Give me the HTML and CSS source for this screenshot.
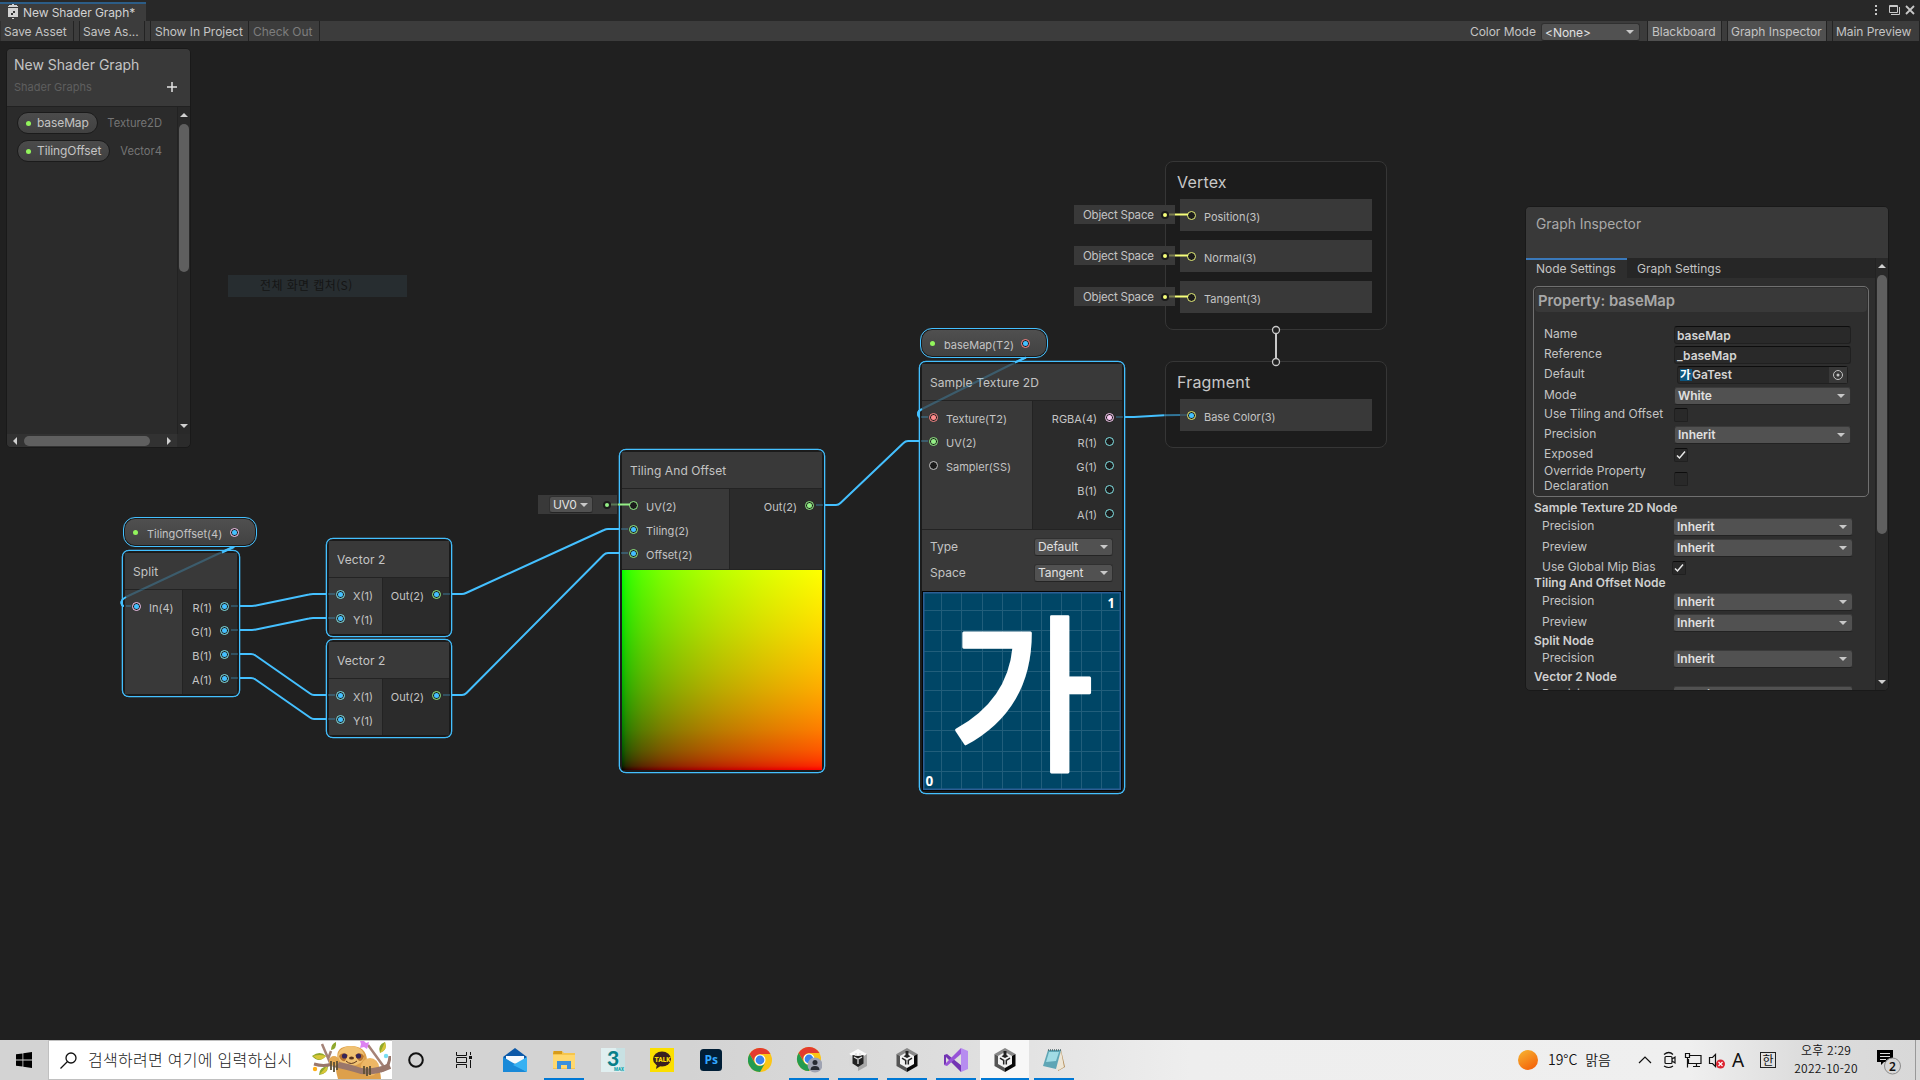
FILE: index.html
```html
<!DOCTYPE html>
<html lang="ko">
<head>
<meta charset="utf-8">
<title>New Shader Graph</title>
<link rel="stylesheet" href="styles.css">
</head>
<body>
<header class="tabbar">
  <div class="tab">
    <svg class="tab-icon" width="10" height="16" viewBox="0 0 10 16"><path fill="#d2d2d2" d="M4 0h2v1H4zM0 2h10v1H0zM0 4h10v9H0zM4 14h2v1H4zM1 1h8v1H1z"/><path fill="#333" d="M5 7h2v2H5zM3 9h2v2H3z"/></svg>
    <span>New Shader Graph*</span>
  </div>
  <div class="window-tools">
    <svg width="50" height="16" viewBox="0 0 50 16" fill="none" stroke="#c8c8c8"><path stroke-width="2" d="M6 3v2M6 7v2M6 11v2"/><path stroke-width="1" d="M19.500 3.500h8v7h-8zM19.500 4.500h8M21 12.500h8.500V5"/><path stroke-width="1.800" d="m36 4 8 8m0-8-8 8"/></svg>
  </div>
</header>
<nav class="toolbar">
  <span class="tool save">Save Asset</span><span class="tool saveas">Save As...</span><span class="tool show">Show In Project</span><span class="tool check">Check Out</span>
  <span class="spacer"></span>
  <span class="mode-label">Color Mode</span><span class="dropdown mode">&lt;None&gt;</span>
  <span class="tool on blackboard-btn">Blackboard</span><span class="tool on inspector-btn">Graph Inspector</span><span class="tool preview-btn">Main Preview</span>
</nav>

<main class="canvas">
  <svg class="edges" width="1920" height="1040" viewBox="0 0 1920 1040">
    <g class="wire">
      <path d="M235 546 126 597Q121 600 121.500 603Q122 606 126 606H131"/>
      <path d="M231 606H252Q254 606 256 605.500L309 594.500Q311 594 313 594H335"/>
      <path d="M231 630H252Q254 630 256 629.500L309 618.500Q311 618 313 618H335"/>
      <path d="M231 654H251Q253.500 654 255.500 655.500L310 693.500Q312 695 314 695H335"/>
      <path d="M231 678H251Q253.500 678 255.500 679.500L310 717.500Q312 719 314 719H335"/>
      <path d="M443 594H462Q464 594 466 593L604 530Q606 529 608 529H628"/>
      <path d="M443 695H462Q464.500 695 466.500 693L603.500 555Q605.500 553 608 553H628"/>
      <path d="M816 505H836Q838.500 505 840.500 503L903.500 443Q905.500 441 908 441H928"/>
      <path d="M1116 417H1134L1164 415.300"/>
      <path d="M1026 357 922 409Q918 411 918 414Q918.500 417 922 417H928"/>
    </g>
  </svg>

  <section class="stack vertex">
    <h2>Vertex</h2>
    <div class="block"><i class="port yellow"></i><span>Position(3)</span></div>
    <div class="block"><i class="port yellow"></i><span>Normal(3)</span></div>
    <div class="block"><i class="port yellow"></i><span>Tangent(3)</span></div>
  </section>
  <section class="stack fragment">
    <h2>Fragment</h2>
    <div class="block"><i class="port yellow linked"></i><span>Base Color(3)</span></div>
  </section>
  <div class="slot space s1"><span>Object Space</span><i class="dot"></i></div>
  <div class="slot space s2"><span>Object Space</span><i class="dot"></i></div>
  <div class="slot space s3"><span>Object Space</span><i class="dot"></i></div>
  <div class="slot uv"><span class="dropdown">UV0</span><i class="dot green"></i></div>

  <div class="pill p-tiling"><i class="exposed"></i><span>TilingOffset(4)</span><i class="port pink linked"></i></div>
  <div class="pill p-base"><i class="exposed"></i><span>baseMap(T2)</span><i class="port red linked"></i></div>

  <article class="node split">
    <h3>Split</h3>
    <div class="ports">
      <div class="in"><div class="row"><i class="port pink linked"></i><span>In(4)</span></div></div>
      <div class="out">
        <div class="row"><span>R(1)</span><i class="port cyan linked"></i></div>
        <div class="row"><span>G(1)</span><i class="port cyan linked"></i></div>
        <div class="row"><span>B(1)</span><i class="port cyan linked"></i></div>
        <div class="row"><span>A(1)</span><i class="port cyan linked"></i></div>
      </div>
    </div>
  </article>
  <article class="node vector v1">
    <h3>Vector 2</h3>
    <div class="ports">
      <div class="in"><div class="row"><i class="port cyan linked"></i><span>X(1)</span></div><div class="row"><i class="port cyan linked"></i><span>Y(1)</span></div></div>
      <div class="out"><div class="row"><span>Out(2)</span><i class="port green linked"></i></div></div>
    </div>
  </article>
  <article class="node vector v2">
    <h3>Vector 2</h3>
    <div class="ports">
      <div class="in"><div class="row"><i class="port cyan linked"></i><span>X(1)</span></div><div class="row"><i class="port cyan linked"></i><span>Y(1)</span></div></div>
      <div class="out"><div class="row"><span>Out(2)</span><i class="port green linked"></i></div></div>
    </div>
  </article>
  <article class="node tiling">
    <h3>Tiling And Offset</h3>
    <div class="ports">
      <div class="in"><div class="row"><i class="port green"></i><span>UV(2)</span></div><div class="row"><i class="port green linked"></i><span>Tiling(2)</span></div><div class="row"><i class="port green linked"></i><span>Offset(2)</span></div></div>
      <div class="out"><div class="row"><span>Out(2)</span><i class="port green own"></i></div></div>
    </div>
    <div class="uv-preview"></div>
  </article>
  <article class="node sample">
    <h3>Sample Texture 2D</h3>
    <div class="ports">
      <div class="in"><div class="row"><i class="port red own"></i><span>Texture(T2)</span></div><div class="row"><i class="port green own"></i><span>UV(2)</span></div><div class="row"><i class="port gray"></i><span>Sampler(SS)</span></div></div>
      <div class="out">
        <div class="row"><span>RGBA(4)</span><i class="port pink own"></i></div>
        <div class="row"><span>R(1)</span><i class="port cyan"></i></div>
        <div class="row"><span>G(1)</span><i class="port cyan"></i></div>
        <div class="row"><span>B(1)</span><i class="port cyan"></i></div>
        <div class="row"><span>A(1)</span><i class="port cyan"></i></div>
      </div>
    </div>
    <div class="controls">
      <div><label>Type</label><span class="dropdown">Default</span></div>
      <div><label>Space</label><span class="dropdown">Tangent</span></div>
    </div>
    <div class="tex-preview">
      <svg width="198" height="198" viewBox="0 0 198 198">
        <rect width="198" height="198" fill="#004666"/>
        <path stroke="#215e7b" d="M18.500 0v198M38.500 0v198M59.500 0v198M79.500 0v198M98.500 0v198M118.500 0v198M138.500 0v198M158.500 0v198M178.500 0v198M0 18.500h198M0 38.500h198M0 59.500h198M0 79.500h198M0 98.500h198M0 119.500h198M0 138.500h198M0 159.500h198M0 179.500h198"/>
        <rect x=".75" y=".75" width="196.500" height="196.500" fill="none" stroke="#2c5f95" stroke-width="1.500"/>
        <text class="glyph" transform="translate(26.500 166) scale(.93 1)">가</text>
        <text class="corner" transform="translate(184.500 15.500) scale(.85 1)">1</text>
        <text class="corner" transform="translate(2.500 193.500) scale(.9 1)">0</text>
      </svg>
    </div>
  </article>

  <svg class="edges" width="1920" height="1040" viewBox="0 0 1920 1040">
    <g class="wire faint">
      <path d="M222 552 126 597M126 606H131M231 606H238M231 630H238M231 654H238M231 678H238M328 594H335M328 618H335M328 695H335M328 719H335M443 594H450M443 695H450M621 529H628M621 553H628M816 505H823M921 441H928M1116 417H1123M921 417H928M1016 362 922 409"/>
    </g>
    <g class="wire">
      <path d="M234 547 222 552.500M1026 357.500 1015 362.500M126 597Q121 600 121.500 603Q122 606 124 606M922 409Q918 411 918 414Q918.500 417 920 417"/>
      <path opacity=".55" d="M1164 415.300 1180 415"/><path opacity=".2" d="M1180 415H1187"/>
    </g>
    <g stroke="#f6ff7a" stroke-width="2"><path d="M1175 214.500h13M1175 255.500h13M1175 296.500h13"/><path opacity=".35" d="M1169 214.500h6M1169 255.500h6M1169 296.500h6"/></g>
    <g stroke="#94ef86" stroke-width="2"><path d="M618 504.500h12"/><path opacity=".35" d="M611 504.500h7"/></g>
    <g fill="#202020" stroke="#c8c8c8"><path stroke-width="2" d="M1276 330v32"/><circle cx="1276" cy="330" r="3.500" stroke-width="1.300"/><circle cx="1276" cy="362" r="3.500" stroke-width="1.300"/></g>
  </svg>

  <aside class="panel blackboard">
    <header><h1>New Shader Graph</h1><div><span>Shader Graphs</span><svg width="10" height="10" viewBox="0 0 10 10" stroke="#e4e4e4" stroke-width="1.500"><path d="M5 0v10M0 5h10"/></svg></div></header>
    <div class="bb-body">
      <ul>
        <li><span class="chip"><i class="exposed"></i>baseMap</span><em>Texture2D</em></li>
        <li><span class="chip"><i class="exposed"></i>TilingOffset</span><em>Vector4</em></li>
      </ul>
      <div class="vbar"><i class="up"></i><b></b><i class="down"></i></div>
    </div>
    <div class="hbar"><i class="left"></i><b></b><i class="right"></i></div>
  </aside>

  <div class="ghost-menu">전체 화면 캡처(S)</div>

  <aside class="panel inspector">
    <header><h1>Graph Inspector</h1></header>
    <div class="insp-main">
      <div class="insp-content">
        <div class="tabs"><span class="active">Node Settings</span><span>Graph Settings</span></div>
        <div class="property">
          <h4>Property: baseMap</h4>
          <div class="field h20"><label>Name</label><span class="text">baseMap</span></div>
          <div class="field h20"><label>Reference</label><span class="text">_baseMap</span></div>
          <div class="field h20"><label>Default</label><span class="object"><svg width="12" height="12" viewBox="0 0 12 12"><rect width="12" height="12" fill="#0d567f"/><text x="0" y="10" font-size="11.500" font-weight="700" fill="#fff" font-family="Noto Sans CJK KR">가</text></svg><span>GaTest</span><svg class="pick" width="18" height="16" viewBox="0 0 18 16"><path fill="#383838" d="M0 0h18v16H0z"/><circle cx="9" cy="8" r="4.500" fill="none" stroke="#c4c4c4"/><circle cx="9" cy="8" r="1.500" fill="#c4c4c4"/></svg></span></div>
          <div class="field h21"><label>Mode</label><span class="dropdown">White</span></div>
          <div class="field h16"><label>Use Tiling and Offset</label><i class="box"></i></div>
          <div class="field h25"><label>Precision</label><span class="dropdown">Inherit</span></div>
          <div class="field h12"><label>Exposed</label><i class="box"><svg width="10" height="10" viewBox="0 0 10 10"><path d="m1 5.500 2.500 2.500L9 1.500"/></svg></i></div>
          <div class="field h40"><label>Override Property<br>Declaration</label><i class="box"></i></div>
        </div>
        <div class="nodes">
          <h5 class="h18">Sample Texture 2D Node</h5>
          <div class="field h19"><label>Precision</label><span class="dropdown">Inherit</span></div>
          <div class="field h23"><label>Preview</label><span class="dropdown">Inherit</span></div>
          <div class="field h14"><label>Use Global Mip Bias</label><i class="box"><svg width="10" height="10" viewBox="0 0 10 10"><path d="m1 5.500 2.500 2.500L9 1.500"/></svg></i></div>
          <h5 class="h20">Tiling And Offset Node</h5>
          <div class="field h17"><label>Precision</label><span class="dropdown">Inherit</span></div>
          <div class="field h25"><label>Preview</label><span class="dropdown">Inherit</span></div>
          <h5 class="h12">Split Node</h5>
          <div class="field h23"><label>Precision</label><span class="dropdown">Inherit</span></div>
          <h5 class="h14">Vector 2 Node</h5>
          <div class="field h21"><label>Precision</label><span class="dropdown">Inherit</span></div>
        </div>
      </div>
      <div class="vbar"><i class="up"></i><b></b><i class="down"></i></div>
    </div>
  </aside>
</main>

<footer class="taskbar">
  <div class="start"><svg width="16" height="16" viewBox="0 0 16 16"><path d="M0 2.300 6.500 1.400V7.500H0zM7.300 1.200 16 0v7.500H7.300zM0 8.500h6.500v6.100L0 13.700zM7.300 8.500H16V16l-8.700-1.200z"/></svg></div>
  <div class="search">
    <svg width="17" height="17" viewBox="0 0 17 17" fill="none" stroke="#111" stroke-width="1.300"><circle cx="11" cy="6" r="5"/><path d="M7.500 9.500.5 16.500"/></svg>
    <span>검색하려면 여기에 입력하십시</span>
    <svg class="sloth" width="79" height="38" viewBox="0 0 79 38">
      <g fill="none" stroke="#a58377" stroke-width="2.500"><path d="M10 3 19 24M19 10 16 18M56 4 72 26" /></g>
      <path fill="#8fa82c" d="M0 15q8-6 14 0-7 8-14 0zM19 9q0-6 5-8 1 7-5 8zM7 34q0-8 9-9 0 8-9 9zM68 12q-3-8 5-11 3 8-5 11z"/>
      <path fill="#d8c638" d="M1 15q7-2 13 0-6 7-13 0zM8 33l7-8q1 8-7 8zM68 12l5-11q3 8-5 11z"/>
      <path fill="#dda04b" d="M26 38q-4-12 0-18Q22 5 39 5q15 0 16 14 13 1 14 19z"/>
      <circle cx="58" cy="26" r="9" fill="#edb765"/><ellipse cx="39" cy="15" rx="13" ry="10" fill="#f0c172"/><path fill="#b8742f" d="M27 15q3-5 9-1l-3 6q-4 1-6-5zM43 14q6-4 9 1-2 7-6 4z"/>
      <circle cx="32.500" cy="15" r="2.600" fill="#352458"/><circle cx="46.500" cy="15" r="2.600" fill="#352458"/><ellipse cx="39.500" cy="17" rx="2.500" ry="1.600" fill="#5b341b"/><path d="M34 20q5 5 11 0" fill="none" stroke="#5b341b"/>
      <path fill="none" stroke="#9a776b" stroke-width="6" d="M21 23q17 3 28 7 14 2 29-5"/>
      <path fill="none" stroke="#9a776b" stroke-width="3" d="M2 23q10 3 18 0M69 30q8-2 9-15"/>
      <circle cx="22" cy="20" r="5" fill="#e5aa55"/><path fill="none" stroke="#5d5036" stroke-width="1.800" d="M19 20v9M22 21v10M25 20v9M52 25v8M55 26v9M58 25v9"/>
      <path fill="#dd83f2" d="m52 0 2 2 3-1-1 4-1 3-3-2-4 1 1-4-1-3z"/><circle cx="3" cy="28" r="2.200" fill="#ffb017"/><circle cx="74" cy="15" r="2.200" fill="#77ddf2"/>
    </svg>
  </div>
  <div class="app wide"><svg width="18" height="18" viewBox="0 0 18 18"><circle cx="9" cy="9" r="6.800" fill="none" stroke="#111" stroke-width="2"/></svg></div>
  <div class="app"><svg width="17" height="16" viewBox="0 0 17 16" fill="none" stroke="#111"><path d="M.5 0v3.500h10V0M.5 16v-3.500h10V16M1 5.500h9.500v5H.5v-5M14.500 0v3M14.500 8v8"/><path stroke-width="3" d="M14.500 4v3"/></svg></div>
  <div class="app first"><svg width="24" height="24" viewBox="0 0 24 24"><path fill="#0b58a8" d="M0 9 12 0l12 9-3 5H3z"/><path fill="#f5f9fd" d="M3 8h18v7H3z"/><path fill="#1889d8" d="M0 9v15h24L12 16z"/><path fill="#36b1f2" d="M24 9v15L10 17z"/></svg></div>
  <div class="app run"><svg width="24" height="24" viewBox="0 0 24 24"><path fill="#f6c54c" d="M1 3h9l2 2h11v16H1z"/><path fill="#d69b1b" d="M2 3h8v3H1z"/><path fill="#ffd86e" d="M1 7h22v13H1z"/><path fill="#3a90dd" d="M5 13h14v8h-4v-4H9v4H5z"/></svg></div>
  <div class="app"><svg width="24" height="24" viewBox="0 0 24 24"><path fill="#e0eff0" d="M0 0h24v24H0z"/><path fill="#c8e1e3" d="M15 0h9v24h-4z"/><text x="6" y="17.500" font-family="Lato" font-size="21" font-weight="900" fill="#087f89">3</text><text x="13" y="22.500" font-family="Roboto" font-size="4.500" font-weight="900" fill="#1ba7ae">MAX</text></svg></div>
  <div class="app"><svg width="24" height="24" viewBox="0 0 24 24"><path fill="#fbdf00" d="M0 0h24v24H0z"/><ellipse cx="12" cy="11" rx="9" ry="7.500" fill="#391f20"/><path fill="#391f20" d="m7 16-1 5 6-4z"/><text x="4.600" y="13.500" font-family="Roboto" font-size="6.500" font-weight="900" fill="#fbdf00">TALK</text></svg></div>
  <div class="app"><svg width="22" height="22" viewBox="0 0 22 22"><rect width="22" height="22" rx="3.500" fill="#001e36"/><text x="4.500" y="15" font-family="Open Sans" font-size="12" font-weight="700" fill="#31a8ff">Ps</text></svg></div>
  <div class="app"><svg width="24" height="24" viewBox="0 0 24 24"><circle cx="12" cy="12" r="12" fill="#fbc516"/><path fill="#e33b2e" d="M1.600 6A12 12 0 0 1 22.400 6H12a6 6 0 0 0-5 9z"/><path fill="#239b50" d="M1.600 6A12 12 0 0 0 12 24l5.200-9A6 6 0 0 1 6.800 15z"/><circle cx="12" cy="12" r="5.500" fill="#fff"/><circle cx="12" cy="12" r="4.400" fill="#3b82ec"/></svg></div>
  <div class="app run"><svg width="26" height="26" viewBox="-1 0 26 26"><circle cx="12" cy="12" r="12" fill="#fbc516"/><path fill="#e33b2e" d="M1.600 6A12 12 0 0 1 22.400 6H12a6 6 0 0 0-5 9z"/><path fill="#239b50" d="M1.600 6A12 12 0 0 0 12 24l5.200-9A6 6 0 0 1 6.800 15z"/><circle cx="12" cy="12" r="5.500" fill="#fff"/><circle cx="12" cy="12" r="4.400" fill="#3b82ec"/><circle cx="18" cy="18" r="7.500" fill="#9fa3b2"/><circle cx="18" cy="15.500" r="2.500" fill="#262a32"/><path fill="#262a32" d="M13.500 23q0-4 4.500-4t4.500 4z"/></svg></div>
  <div class="app run"><svg width="22" height="24" viewBox="0 0 22 24"><path fill="#fafafa" d="m11 1 9 5-9 6-9-6z"/><path fill="#d8d8d8" d="m2 6 9 6v11l-9-5z"/><path fill="#a8a8a8" d="m20 6-9 6v11l9-5z"/><path fill="#222" d="m11 8 5.500-1v8.500L11 19l-5.500-3.500V7z"/><path fill="none" stroke="#ddd" stroke-width="1.300" d="m7 9 4 2.300L15 9m-4 2.300V16M9 5v3m4-3v3"/></svg></div>
  <div class="app run"><svg width="22" height="24" viewBox="0 0 22 24"><path fill="#888" d="m11 0 10.500 6L11 12 .5 6z"/><path fill="#555" d="m.5 6 10.500 6v12L.5 18z"/><path fill="#080808" d="M21.500 6 11 12v12l10.500-6z"/><path fill="#f2f2f2" d="m11 4 7 4v8l-7 4-7-4V8z"/><path fill="#222" d="m9.500 3h3v4l2 1.200L11 10 7.500 8.200l2-1.200z"/><path fill="none" stroke="#222" stroke-width="1.500" d="m6 10.200 3.700 2.200v4.200M16 10.200l-3.700 2.200v4.200"/></svg></div>
  <div class="app run"><svg width="24" height="24" viewBox="0 0 24 24"><path fill="#7334b3" d="M0 7 3 6l15 12-1 6L2 9v7L0 17z"/><path fill="#9854d7" d="M0 17 17 0v6L3 18z"/><path fill="#b78cf0" d="m17 0 7 3v18l-7 3z"/></svg></div>
  <div class="app run active"><svg width="22" height="24" viewBox="0 0 22 24"><path fill="#888" d="m11 0 10.500 6L11 12 .5 6z"/><path fill="#555" d="m.5 6 10.500 6v12L.5 18z"/><path fill="#080808" d="M21.500 6 11 12v12l10.500-6z"/><path fill="#f2f2f2" d="m11 4 7 4v8l-7 4-7-4V8z"/><path fill="#222" d="m9.500 3h3v4l2 1.200L11 10 7.500 8.200l2-1.200z"/><path fill="none" stroke="#222" stroke-width="1.500" d="m6 10.200 3.700 2.200v4.200M16 10.200l-3.700 2.200v4.200"/></svg></div>
  <div class="app run"><svg width="24" height="24" viewBox="0 0 24 24"><path fill="#b18a52" d="m19 2 4 17-7 4z"/><path fill="#eee6d6" d="m19 3 3 16-5 3-3-1z"/><path fill="#5fa6b5" d="M6 2h13l-5 19-13-3z"/><path fill="#a1dce5" d="M7 4h10l-3 9-10 1z"/><path stroke="#4e6164" stroke-width="1.500" stroke-dasharray="1 1" d="M6 2h13"/></svg></div>
  <div class="tray">
    <svg class="sun" width="20" height="20" viewBox="0 0 20 20"><defs><linearGradient id="sun" x2=".6" y2="1"><stop stop-color="#f7b733"/><stop offset="1" stop-color="#f4660c"/></linearGradient></defs><circle cx="10" cy="10" r="10" fill="url(#sun)"/></svg>
    <span class="weather">19°C&nbsp; 맑음</span>
    <svg class="tray-icons" width="90" height="18" viewBox="0 0 90 18" fill="none" stroke="#111" stroke-width="1.200"><path d="m1 12 6-6 6 6"/><rect x="27" y="5.500" width="7" height="7" rx="1"/><path d="m34 8 3-2v6l-3-2M26 3.500q5-4 9 0M26 15q5 3 9 0M51.500 4.500H63v8H50.500V8M47.500 2.500h4v4h-4zM49.500 6.500v10M55 15.500h7M58.500 12.500v3M71.500 6.500h3l3-3v12l-3-3h-3z"/><circle cx="82.500" cy="13" r="4.500" fill="#dc2431" stroke="none"/><path stroke="#fff" d="m80.500 11 4 4m0-4-4 4"/></svg>
    <span class="ime">A</span><span class="han">한</span>
    <div class="clock"><span>오후 2:29</span><span>2022-10-20</span></div>
    <svg class="note" width="26" height="28" viewBox="0 0 26 28"><path d="M0 2h16v12H7l-3 3v-3H0z"/><path stroke="#ddd" d="M3 5.500h10M3 8.500h10M3 11.500h6"/><circle cx="15.500" cy="18" r="8" fill="#d7d7d7" stroke="#8b8b8b"/><text x="12" y="22.500" font-family="Noto Sans" font-size="12" fill="#111" font-weight="600">2</text></svg>
  </div>
</footer>
</body>
</html>
```
FILE: styles.css
```css
* { box-sizing: border-box; }
body { margin: 0; width: 1920px; height: 1080px; overflow: hidden; display: flex; flex-direction: column; background: #202020; color: #c4c4c4; font: 12px/16px Inter, "Noto Sans CJK KR", sans-serif; }
h1, h2, h3, h4, h5, ul { margin: 0; padding: 0; font-weight: 400; list-style: none; }
i, em { font-style: normal; }
svg { display: block; flex: none; }

/* Window frame */
.tabbar { height: 21px; flex: none; background: #282828; display: flex; justify-content: space-between; }
.tab { width: 146px; height: 19px; margin-top: 2px; border-top: 2px solid #2c5d87; background: #3c3c3c; display: flex; gap: 5px; padding-left: 8px; color: #d2d2d2; line-height: 18px; letter-spacing: -.08px; white-space: nowrap; }
.window-tools { padding: 2px 0 0 0; }
.toolbar { height: 20px; flex: none; background: #3c3c3c; display: flex; align-items: stretch; line-height: 21px; white-space: nowrap; letter-spacing: -.05px; }
.tool { border: solid #232323; border-width: 0 1px; flex: none; }
.save { width: 74px; padding-left: 3px; border-left-color: #303030; }
.saveas { width: 66px; margin-left: 5px; padding-left: 3px; }
.show { width: 99px; margin-left: 5px; padding-left: 4px; }
.check { width: 71px; padding-left: 4px; border-left: 0; color: #7d7d7d; }
.spacer { flex: 1; }
.mode-label { width: 71px; }
.dropdown { background: #515151; border: 1px solid #303030; border-bottom-color: #242424; border-radius: 3px; display: flex; align-items: center; justify-content: space-between; color: #e0e0e0; }
.dropdown::after { content: ""; flex: none; border: solid transparent; border-width: 4.500px 4px 0; border-top-color: #c8c8c8; }
.mode { width: 99px; height: 18px; margin: 2px 7px 0 0; padding: 0 5px 0 3px; }
.on { background: #505050; }
.blackboard-btn { width: 75px; padding-left: 4px; margin-right: 5px; }
.inspector-btn { width: 100px; padding-left: 3px; margin-right: 5px; }
.preview-btn { width: 88px; padding-left: 3px; }

.canvas { flex: none; margin-top: -41px; height: 1040px; position: relative; background: #202020; z-index: 0; clip-path: inset(41px 0 0); }
.canvas > * { position: absolute; }
.edges { left: 0; top: 0; pointer-events: none; }
.wire { fill: none; stroke: #44c0ff; stroke-width: 2; }
.faint { opacity: .26; }

/* Ports */
.port { width: 9px; height: 9px; flex: none; border: 1.400px solid; border-radius: 50%; background: #1b1b1b; display: grid; place-items: center; }
.port.linked::after, .port.own::after { content: ""; width: 5px; height: 5px; border-radius: 50%; background: #44c0ff; }
.port.own::after { background: currentColor; }
.cyan { color: #84e4e7; }
.green { color: #94ef86; }
.pink { color: #fbcbf4; }
.red { color: #ff8b8b; }
.yellow { color: #e4ee78; }
.gray { color: #c4c4c4; }
.exposed { width: 5px; height: 5px; border-radius: 50%; background: #92f45c; flex: none; }

/* Nodes */
.node { border: 1px solid #44c0ff; border-radius: 7px; padding: 2px; background: #1b1b1b; box-shadow: 0 0 0 .3px #44c0ff; }
.node h3 { height: 37px; padding: 0 8px; line-height: 38px; font-size: 12px; background: #393939; border-bottom: 1px solid #232323; color: #c4c4c4; letter-spacing: .08px; }
.ports { display: flex; }
.in, .out { padding: 4px 0; background: #393939; }
.in { border-right: 1px solid #232323; flex: none; }
.out { flex: 1; background: #2b2b2b; }
.row { height: 24px; display: flex; align-items: center; padding: 0 8px 0 7px; gap: 8px; font-size: 11px; white-space: nowrap; }
.row span { padding-top: 4px; }
.out .row { justify-content: flex-end; gap: 8px; }
.split { left: 122px; top: 550px; width: 118px; height: 147px; }
.split .in { width: 58px; }
.vector { left: 326px; width: 126px; height: 99px; }
.vector .in { width: 54px; }
.v1 { top: 538px; }
.v2 { top: 639px; }
.tiling { left: 619px; top: 449px; width: 206px; height: 324px; }
.tiling .in { width: 108px; }
.tiling .ports { height: 81px; border-bottom: 1px solid #232323; }
.uv-preview { height: 200px; background-blend-mode: screen; background-image: linear-gradient(to right, #000, #270000 2%, #3f0000 5%, #590000 10%, #7c0000 20%, #950000 30%, #aa0000 40%, #bc0000 50%, #cb0000 60%, #da0000 70%, #e70000 80%, #f30000 90%, #f00), linear-gradient(to top, #000, #002700 2%, #003f00 5%, #005900 10%, #007c00 20%, #009500 30%, #00aa00 40%, #00bc00 50%, #00cb00 60%, #00da00 70%, #00e700 80%, #00f300 90%, #0f0); }
.sample { left: 919px; top: 361px; width: 206px; height: 433px; }
.sample .in { width: 111px; }
.sample .ports { height: 129px; border-bottom: 1px solid #232323; }
.controls { height: 61px; padding: 4px 9px 0 8px; background: #393939; }
.controls div { height: 26px; display: flex; align-items: center; justify-content: space-between; }
.controls .dropdown { width: 79px; height: 18px; padding: 0 4px 0 3px; letter-spacing: -.1px; }
.tex-preview { height: 200px; padding: 1px; background: #050505; }
.glyph { font: 500 169px "Noto Sans CJK KR"; fill: #fff; stroke: #fff; stroke-width: 3px; stroke-linejoin: round; }
.corner { font: 700 15px "Open Sans", sans-serif; fill: #fff; }

.pill { height: 30px; border: 1.300px solid #44c0ff; border-radius: 12px; padding: 0 17px 0 9px; background: linear-gradient(#505050, #414141); box-shadow: inset 0 0 0 1px #1b1b1b; display: flex; align-items: center; font-size: 11px; }
.pill span { padding-top: 4px; flex: 1; padding-left: 9px; }
.p-tiling { left: 123px; top: 517px; width: 134px; }
.p-base { left: 920px; top: 328px; width: 128px; }

.slot { height: 19px; background: #393939; display: flex; align-items: center; }
.space { left: 1074px; width: 101px; padding-left: 9px; gap: 8px; font-size: 11.500px; letter-spacing: -.2px; white-space: nowrap; }
.space span { width: 70px; }
.s1 { top: 205px; } .s2 { top: 246px; } .s3 { top: 287px; }
.dot { width: 8px; height: 8px; flex: none; border: 2px solid #1b1b1b; border-radius: 50%; background: #f6ff7a; }
.dot.green { background: #94ef86; }
.uv { left: 538px; top: 495px; width: 79px; padding-left: 11px; gap: 10px; }
.uv .dropdown { width: 44px; height: 17px; padding: 0 4px 0 3px; letter-spacing: -.4px; }

.stack { left: 1165px; width: 222px; border: 1px solid #363636; border-radius: 8px; background: #1c1c1c; padding: 8px 14px; display: flex; flex-direction: column; gap: 9px; }
.stack h2 { height: 20px; line-height: 24px; margin: 0 -3px; font-size: 16px; color: #c8c8c8; letter-spacing: .2px; }
.vertex { top: 161px; height: 169px; }
.fragment { top: 361px; height: 87px; }
.block { height: 32px; background: #393939; display: flex; align-items: center; gap: 8px; padding: 0 7px; font-size: 11px; flex: none; }
.block span { padding-top: 4px; }

/* Panels */
.panel { background: #2e2e2e; border: 1px solid #191919; border-radius: 5px; overflow: hidden; display: flex; flex-direction: column; }
.panel header { background: #393939; flex: none; }
.panel h1 { font-size: 14px; line-height: 20px; white-space: nowrap; }
.blackboard { left: 6px; top: 48px; width: 185px; height: 400px; background: #2b2b2b; }
.blackboard header { height: 58px; padding: 6px 13px 0 7px; border-bottom: 1px solid #212121; }
.blackboard header div { display: flex; justify-content: space-between; align-items: center; color: #5f5f5f; font-size: 11px; padding-top: 3px; }
.blackboard header span { padding-top: 1px; }
.bb-body { flex: 1; display: flex; justify-content: space-between; }
.blackboard ul { width: 155px; padding: 5px 0 0 10px; }
.blackboard li { height: 28px; display: flex; align-items: flex-start; justify-content: space-between; }
.chip { height: 22px; border: 1px solid #1b1b1b; border-radius: 11px; background: linear-gradient(#4b4b4b, #414141); display: flex; align-items: center; gap: 6px; padding: 0 8px; letter-spacing: -.1px; }
.blackboard em { color: #757575; font-size: 11.200px; line-height: 23px; }
.vbar { width: 13px; flex: none; background: #292929; border-left: 1px solid #222; display: flex; flex-direction: column; align-items: center; padding: 6px 0; }
.vbar b, .hbar b { background: #5f5f5f; border-radius: 5px; }
.vbar b { width: 10px; height: 148px; margin: 7px 0 auto; }
.up, .down { border: solid transparent; border-width: 0 4px 4.500px; border-bottom-color: #d0d0d0; }
.down { border-width: 4.500px 4px 0; border-top-color: #d0d0d0; }
.hbar { height: 13px; width: 170px; flex: none; background: #323232; display: flex; align-items: center; padding: 0 6px 0 6px; }
.hbar b { width: 126px; height: 10px; margin: 0 auto 0 7px; }
.left, .right { border: solid transparent; border-width: 4px 4.500px 4px 0; border-right-color: #d0d0d0; }
.right { border-width: 4px 0 4px 4.500px; border-left-color: #d0d0d0; }

.ghost-menu { left: 228px; top: 275px; width: 179px; height: 22px; padding-left: 32px; background: #272d30; color: #151515; font: 12px/20px "Noto Sans CJK KR", sans-serif; letter-spacing: .4px; white-space: nowrap; }

.inspector { left: 1525px; top: 206px; width: 364px; height: 485px; }
.inspector header { height: 51px; padding: 7px 10px; }
.inspector h1 { color: #a9a9a9; font-size: 13.800px; }
.insp-main { display: flex; flex: 1; min-height: 0; }
.insp-content { flex: 1; min-width: 0; overflow: hidden; }
.inspector .vbar b { height: 259px; }
.tabs { height: 20px; background: #262626; display: flex; line-height: 17px; }
.tabs span { padding: 2px 10px 0; white-space: nowrap; }
.tabs .active { width: 101px; background: #2e2e2e; border-top: 2px solid #3a79bb; padding-top: 0; }
.property { width: 336px; height: 211px; margin: 8px 0 0 7px; border: 1px solid #707070; border-radius: 5px; padding: 1px 1px 0; }
h4 { height: 24px; margin-bottom: 13px; padding-left: 3px; border-radius: 4px; background: #393939; color: #a8a8a8; font-size: 14.800px; font-weight: 600; line-height: 27px; }
h5 { padding-left: 8px; font-size: 12px; font-weight: 600; color: #d0d0d0; display: flex; align-items: center; }
.nodes { padding-top: 2px; }
.field { display: grid; grid-template-columns: 130px 1fr; align-items: center; padding-left: 9px; }
.field label { line-height: 15px; padding-bottom: 3px; white-space: nowrap; }
.field > .dropdown { width: 177px; height: 18px; padding: 0 5px 0 3px; font-weight: 600; border-color: #3a3a3a #303030 #222; }
.nodes .field { grid-template-columns: 131px 1fr; padding-left: 16px; }
.nodes .dropdown { width: 180px; }
.text, .object { width: 177px; height: 18px; border: 1px solid #202020; border-top-color: #0d0d0d; border-radius: 3px; background: #292929; font-weight: 600; padding-left: 2px; line-height: 18px; color: #d4d4d4; }
.object { width: 171px; margin-left: 3px; display: flex; align-items: center; }
.pick { margin-left: auto; }
.box { width: 14px; height: 14px; margin-top: -1px; border: 1px solid #202020; border-top-color: #0d0d0d; border-radius: 2px; background: #292929; display: grid; place-items: center; }
.nodes .box { margin-left: -1px; }
.box path { fill: none; stroke: #e8e8e8; stroke-width: 1.500; }
.h12 { height: 12px; } .h14 { height: 14px; } .h16 { height: 16px; } .h17 { height: 17px; } .h18 { height: 18px; } .h19 { height: 19px; }
.h20 { height: 20px; } .h21 { height: 21px; } .h23 { height: 23px; } .h25 { height: 25px; } .h40 { height: 41px; }
.h12 label, .h12 .box { position: relative; top: -1px; }

/* Taskbar */
.taskbar { height: 40px; flex: none; display: flex; background: linear-gradient(90deg, #d3d3d3 0, #d3d3d3 36%, #dedede 50%, #eee 62%, #efefef 88%, #dcdcdc 94%, #d8d8d8 100%); color: #111; font-family: "Noto Sans CJK KR", sans-serif; }
.start { width: 48px; flex: none; padding: 12px 16px; }
.search { width: 344px; flex: none; border: 1px solid #c0c0c0; border-right: 0; background: #fff; display: flex; align-items: center; padding-left: 11px; }
.search span { width: 224px; margin-left: 11px; padding-bottom: 2px; font-size: 16px; letter-spacing: .28px; white-space: nowrap; color: #222; font-weight: 300; }
.sloth { align-self: flex-start; }
.app { width: 49.030px; flex: none; display: flex; align-items: center; justify-content: center; }
.wide { width: 48px; }
.first { margin-left: 1px; }
.run { background: linear-gradient(#0078d4, #0078d4) center bottom / 40px 2px no-repeat; }
.run.active { background: linear-gradient(#0078d4, #0078d4) center bottom / 48px 2px no-repeat, #f7f7f7; }
.tray { flex: 1; display: flex; align-items: center; border-right: 1px solid #999; margin-right: 4px; }
.sun { margin-left: auto; }
.weather { width: 90px; margin-left: 10px; padding-bottom: 2px; font-size: 14px; white-space: nowrap; font-weight: 350; }
.tray-icons { width: 90px; }
.ime { width: 28px; margin-left: 4px; font: 19px/20px "Noto Sans", sans-serif; }
.han { width: 16px; height: 16px; border: 1px solid #222; font-size: 12px; line-height: 14px; text-align: center; }
.clock { width: 70px; margin: 0 16px 2px 15px; display: flex; flex-direction: column; align-items: center; font-size: 12px; line-height: 18px; letter-spacing: .25px; font-weight: 350; }
.note { margin: 4px 12px 0 0; }
```
